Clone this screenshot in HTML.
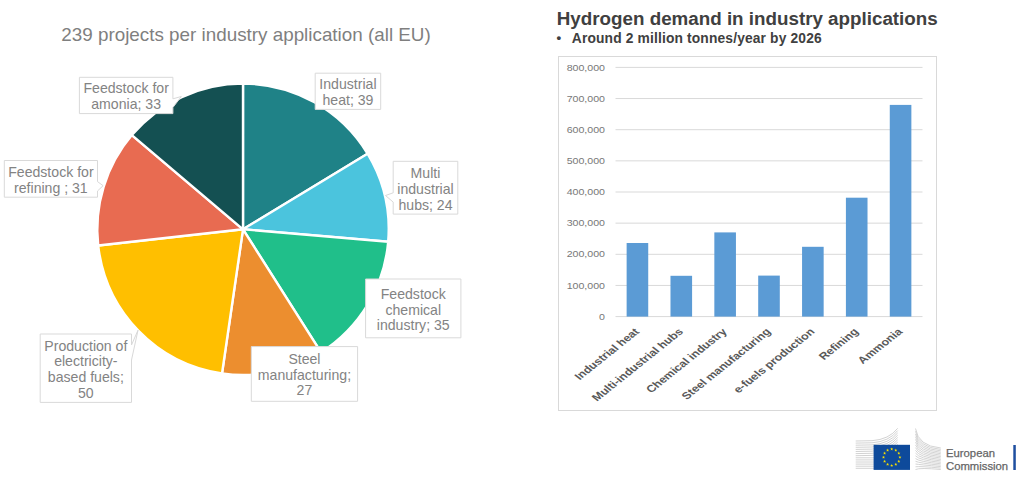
<!DOCTYPE html>
<html><head><meta charset="utf-8">
<style>
html,body{margin:0;padding:0;background:#fff;}
body{width:1024px;height:483px;position:relative;overflow:hidden;font-family:"Liberation Sans",sans-serif;}
.t{position:absolute;white-space:nowrap;line-height:1;}
svg{position:absolute;left:0;top:0;}
svg text{font-family:"Liberation Sans",sans-serif;}
</style></head>
<body>
<svg width="1024" height="483" viewBox="0 0 1024 483">
<g stroke="#fff" stroke-width="2.4" stroke-linejoin="round">
<path d="M243.00,229.30 L243.00,83.60 A145.7,145.7 0 0 1 367.55,153.70 Z" fill="#1f8287"/>
<path d="M243.00,229.30 L367.55,153.70 A145.7,145.7 0 0 1 388.17,241.73 Z" fill="#4bc4dd"/>
<path d="M243.00,229.30 L388.17,241.73 A145.7,145.7 0 0 1 321.04,352.34 Z" fill="#20bf8a"/>
<path d="M243.00,229.30 L321.04,352.34 A145.7,145.7 0 0 1 222.01,373.48 Z" fill="#ec8e2f"/>
<path d="M243.00,229.30 L222.01,373.48 A145.7,145.7 0 0 1 98.21,245.55 Z" fill="#ffbf00"/>
<path d="M243.00,229.30 L98.21,245.55 A145.7,145.7 0 0 1 131.87,135.08 Z" fill="#e86b51"/>
<path d="M243.00,229.30 L131.87,135.08 A145.7,145.7 0 0 1 243.00,83.60 Z" fill="#145052"/>
</g>
<path d="M315.2,73.2 L380.7,73.2 L380.7,109.4 L315.2,109.4 Z" fill="#fff" stroke="#d9d9d9" stroke-width="1"/>
<text x="347.95" y="89.20" text-anchor="middle" font-size="14.1" fill="#838383">Industrial</text>
<text x="347.95" y="105.00" text-anchor="middle" font-size="14.1" fill="#838383">heat; 39</text>
<path d="M393.2,161.3 L457.8,161.3 L457.8,214.1 L393.2,214.1 L393.2,202.1 L385.5,195.5 L393.2,192.8 Z" fill="#fff" stroke="#d9d9d9" stroke-width="1"/>
<text x="425.50" y="178.00" text-anchor="middle" font-size="14.1" fill="#838383">Multi</text>
<text x="425.50" y="193.80" text-anchor="middle" font-size="14.1" fill="#838383">industrial</text>
<text x="425.50" y="209.60" text-anchor="middle" font-size="14.1" fill="#838383">hubs; 24</text>
<path d="M365.6,279.0 L460.9,279.0 L460.9,337.8 L365.6,337.8 Z" fill="#fff" stroke="#d9d9d9" stroke-width="1"/>
<text x="413.25" y="298.70" text-anchor="middle" font-size="14.1" fill="#838383">Feedstock</text>
<text x="413.25" y="314.50" text-anchor="middle" font-size="14.1" fill="#838383">chemical</text>
<text x="413.25" y="330.30" text-anchor="middle" font-size="14.1" fill="#838383">industry; 35</text>
<path d="M251.3,346.6 L357.6,346.6 L357.6,401.3 L251.3,401.3 Z" fill="#fff" stroke="#d9d9d9" stroke-width="1"/>
<text x="304.45" y="363.70" text-anchor="middle" font-size="14.1" fill="#838383">Steel</text>
<text x="304.45" y="379.50" text-anchor="middle" font-size="14.1" fill="#838383">manufacturing;</text>
<text x="304.45" y="395.30" text-anchor="middle" font-size="14.1" fill="#838383">27</text>
<path d="M40.2,334.0 L131.5,334.0 L131.5,345 L138,330.2 L131.5,360 L131.5,402.4 L40.2,402.4 Z" fill="#fff" stroke="#d9d9d9" stroke-width="1"/>
<text x="85.85" y="350.50" text-anchor="middle" font-size="14.1" fill="#838383">Production of</text>
<text x="85.85" y="366.30" text-anchor="middle" font-size="14.1" fill="#838383">electricity-</text>
<text x="85.85" y="382.10" text-anchor="middle" font-size="14.1" fill="#838383">based fuels;</text>
<text x="85.85" y="397.90" text-anchor="middle" font-size="14.1" fill="#838383">50</text>
<path d="M4.3,160.5 L97.5,160.5 L97.5,181.6 L103.1,185.7 L97.5,191 L97.5,197.2 L4.3,197.2 Z" fill="#fff" stroke="#d9d9d9" stroke-width="1"/>
<text x="50.90" y="176.70" text-anchor="middle" font-size="14.1" fill="#838383">Feedstock for</text>
<text x="50.90" y="192.50" text-anchor="middle" font-size="14.1" fill="#838383">refining ; 31</text>
<path d="M79.4,77.3 L172.9,77.3 L172.9,98.8 L181.3,96.5 L172.9,107.5 L172.9,113.6 L79.4,113.6 Z" fill="#fff" stroke="#d9d9d9" stroke-width="1"/>
<text x="126.15" y="93.00" text-anchor="middle" font-size="14.1" fill="#838383">Feedstock for</text>
<text x="126.15" y="108.80" text-anchor="middle" font-size="14.1" fill="#838383">amonia; 33</text>
<text x="61.3" y="40.8" font-size="18.83" fill="#7f7f7f">239 projects per industry application (all EU)</text>
<text x="556.8" y="24.8" font-size="18.8" font-weight="bold" fill="#404040">Hydrogen demand in industry applications</text>
<text x="556.4" y="41.7" font-size="13.3" font-weight="bold" fill="#404040">•</text>
<text x="571.8" y="42.6" font-size="13.8" font-weight="bold" fill="#404040" letter-spacing="0.15">Around 2 million tonnes/year by 2026</text>
<rect x="558.5" y="56.5" width="378.0" height="354.0" fill="none" stroke="#d9d9d9" stroke-width="1"/>
<line x1="615.5" y1="316.60" x2="922.5" y2="316.60" stroke="#d9d9d9" stroke-width="1"/>
<line x1="615.5" y1="285.45" x2="922.5" y2="285.45" stroke="#d9d9d9" stroke-width="1"/>
<line x1="615.5" y1="254.30" x2="922.5" y2="254.30" stroke="#d9d9d9" stroke-width="1"/>
<line x1="615.5" y1="223.15" x2="922.5" y2="223.15" stroke="#d9d9d9" stroke-width="1"/>
<line x1="615.5" y1="192.00" x2="922.5" y2="192.00" stroke="#d9d9d9" stroke-width="1"/>
<line x1="615.5" y1="160.85" x2="922.5" y2="160.85" stroke="#d9d9d9" stroke-width="1"/>
<line x1="615.5" y1="129.70" x2="922.5" y2="129.70" stroke="#d9d9d9" stroke-width="1"/>
<line x1="615.5" y1="98.55" x2="922.5" y2="98.55" stroke="#d9d9d9" stroke-width="1"/>
<line x1="615.5" y1="67.40" x2="922.5" y2="67.40" stroke="#d9d9d9" stroke-width="1"/>
<text transform="translate(605,319.70) scale(1.25,1)" x="0" y="0" text-anchor="end" font-size="8.5" fill="#787878">0</text>
<text transform="translate(605,288.55) scale(1.25,1)" x="0" y="0" text-anchor="end" font-size="8.5" fill="#787878">100,000</text>
<text transform="translate(605,257.40) scale(1.25,1)" x="0" y="0" text-anchor="end" font-size="8.5" fill="#787878">200,000</text>
<text transform="translate(605,226.25) scale(1.25,1)" x="0" y="0" text-anchor="end" font-size="8.5" fill="#787878">300,000</text>
<text transform="translate(605,195.10) scale(1.25,1)" x="0" y="0" text-anchor="end" font-size="8.5" fill="#787878">400,000</text>
<text transform="translate(605,163.95) scale(1.25,1)" x="0" y="0" text-anchor="end" font-size="8.5" fill="#787878">500,000</text>
<text transform="translate(605,132.80) scale(1.25,1)" x="0" y="0" text-anchor="end" font-size="8.5" fill="#787878">600,000</text>
<text transform="translate(605,101.65) scale(1.25,1)" x="0" y="0" text-anchor="end" font-size="8.5" fill="#787878">700,000</text>
<text transform="translate(605,70.50) scale(1.25,1)" x="0" y="0" text-anchor="end" font-size="8.5" fill="#787878">800,000</text>
<rect x="626.63" y="243.00" width="21.6" height="73.60" fill="#5b9bd5"/>
<rect x="670.49" y="275.80" width="21.6" height="40.80" fill="#5b9bd5"/>
<rect x="714.34" y="232.40" width="21.6" height="84.20" fill="#5b9bd5"/>
<rect x="758.20" y="275.60" width="21.6" height="41.00" fill="#5b9bd5"/>
<rect x="802.06" y="246.80" width="21.6" height="69.80" fill="#5b9bd5"/>
<rect x="845.91" y="197.70" width="21.6" height="118.90" fill="#5b9bd5"/>
<rect x="889.77" y="104.90" width="21.6" height="211.70" fill="#5b9bd5"/>
<text transform="translate(639.93,332.30) scale(1.25,1) rotate(-45)" x="0" y="0" text-anchor="end" font-size="10.0" font-weight="bold" fill="#595959">Industrial heat</text>
<text transform="translate(683.79,332.30) scale(1.25,1) rotate(-45)" x="0" y="0" text-anchor="end" font-size="10.0" font-weight="bold" fill="#595959">Multi-industrial hubs</text>
<text transform="translate(727.64,332.30) scale(1.25,1) rotate(-45)" x="0" y="0" text-anchor="end" font-size="10.0" font-weight="bold" fill="#595959">Chemical industry</text>
<text transform="translate(771.50,332.30) scale(1.25,1) rotate(-45)" x="0" y="0" text-anchor="end" font-size="10.0" font-weight="bold" fill="#595959">Steel manufacturing</text>
<text transform="translate(815.36,332.30) scale(1.25,1) rotate(-45)" x="0" y="0" text-anchor="end" font-size="10.0" font-weight="bold" fill="#595959">e-fuels production</text>
<text transform="translate(859.21,332.30) scale(1.25,1) rotate(-45)" x="0" y="0" text-anchor="end" font-size="10.0" font-weight="bold" fill="#595959">Refining</text>
<text transform="translate(903.07,332.30) scale(1.25,1) rotate(-45)" x="0" y="0" text-anchor="end" font-size="10.0" font-weight="bold" fill="#595959">Ammonia</text>
<path d="M855.7,441.00 L872,440.70 Q889,439.50 897.7,428.30" fill="none" stroke="#cdcdcd" stroke-width="0.9"/>
<path d="M855.7,443.10 L872,442.80 Q889,441.60 897.7,430.60" fill="none" stroke="#cdcdcd" stroke-width="0.9"/>
<path d="M855.7,445.20 L872,444.90 Q889,443.70 897.7,432.90" fill="none" stroke="#cdcdcd" stroke-width="0.9"/>
<path d="M855.7,447.30 L872,447.00 Q889,445.80 897.7,435.20" fill="none" stroke="#cdcdcd" stroke-width="0.9"/>
<path d="M855.7,449.40 L872,449.10 Q889,447.90 897.7,437.50" fill="none" stroke="#cdcdcd" stroke-width="0.9"/>
<path d="M855.7,451.50 L872,451.20 Q889,450.00 897.7,439.80" fill="none" stroke="#cdcdcd" stroke-width="0.9"/>
<path d="M855.7,453.60 L872,453.30 Q889,452.10 897.7,442.10" fill="none" stroke="#cdcdcd" stroke-width="0.9"/>
<path d="M855.7,455.70 L872,455.40 Q889,454.20 897.7,444.40" fill="none" stroke="#cdcdcd" stroke-width="0.9"/>
<line x1="855.7" y1="457.80" x2="874" y2="457.80" stroke="#cdcdcd" stroke-width="0.9"/>
<line x1="855.7" y1="459.90" x2="874" y2="459.90" stroke="#cdcdcd" stroke-width="0.9"/>
<line x1="855.7" y1="462.00" x2="874" y2="462.00" stroke="#cdcdcd" stroke-width="0.9"/>
<line x1="855.7" y1="464.10" x2="874" y2="464.10" stroke="#cdcdcd" stroke-width="0.9"/>
<line x1="855.7" y1="466.20" x2="874" y2="466.20" stroke="#cdcdcd" stroke-width="0.9"/>
<line x1="855.7" y1="468.30" x2="874" y2="468.30" stroke="#cdcdcd" stroke-width="0.9"/>
<path d="M915.5,428.50 Q918.00,446.00 940.8,448.00" fill="none" stroke="#cfcfcf" stroke-width="0.9"/>
<path d="M915.5,431.23 Q918.13,447.43 940.8,449.43" fill="none" stroke="#cfcfcf" stroke-width="0.9"/>
<path d="M915.5,433.97 Q918.27,448.87 940.8,450.87" fill="none" stroke="#cfcfcf" stroke-width="0.9"/>
<path d="M915.5,436.70 Q918.40,450.30 940.8,452.30" fill="none" stroke="#cfcfcf" stroke-width="0.9"/>
<path d="M915.5,439.43 Q918.53,451.73 940.8,453.73" fill="none" stroke="#cfcfcf" stroke-width="0.9"/>
<path d="M915.5,442.17 Q918.67,453.17 940.8,455.17" fill="none" stroke="#cfcfcf" stroke-width="0.9"/>
<path d="M915.5,444.90 Q918.80,454.60 940.8,456.60" fill="none" stroke="#cfcfcf" stroke-width="0.9"/>
<path d="M915.5,447.63 Q918.93,456.03 940.8,458.03" fill="none" stroke="#cfcfcf" stroke-width="0.9"/>
<path d="M915.5,450.37 Q919.07,457.47 940.8,459.47" fill="none" stroke="#cfcfcf" stroke-width="0.9"/>
<path d="M915.5,453.10 Q919.20,458.90 940.8,460.90" fill="none" stroke="#cfcfcf" stroke-width="0.9"/>
<path d="M915.5,455.83 Q919.33,460.33 940.8,462.33" fill="none" stroke="#cfcfcf" stroke-width="0.9"/>
<path d="M915.5,458.57 Q919.47,461.77 940.8,463.77" fill="none" stroke="#cfcfcf" stroke-width="0.9"/>
<path d="M915.5,461.30 Q919.60,463.20 940.8,465.20" fill="none" stroke="#cfcfcf" stroke-width="0.9"/>
<path d="M915.5,464.03 Q919.73,464.63 940.8,466.63" fill="none" stroke="#cfcfcf" stroke-width="0.9"/>
<path d="M915.5,466.77 Q919.87,466.07 940.8,468.07" fill="none" stroke="#cfcfcf" stroke-width="0.9"/>
<path d="M915.5,469.50 Q920.00,467.50 940.8,469.50" fill="none" stroke="#cfcfcf" stroke-width="0.9"/>
<rect x="873.6" y="444.8" width="36.4" height="25.1" fill="#0e4a9b"/>
<polygon points="891.70,447.50 892.11,448.53 893.22,448.61 892.37,449.32 892.64,450.39 891.70,449.80 890.76,450.39 891.03,449.32 890.18,448.61 891.29,448.53" fill="#f8e000"/>
<polygon points="895.80,448.60 896.21,449.63 897.32,449.70 896.47,450.41 896.74,451.49 895.80,450.90 894.86,451.49 895.13,450.41 894.28,449.70 895.39,449.63" fill="#f8e000"/>
<polygon points="898.80,451.60 899.21,452.63 900.32,452.71 899.47,453.42 899.74,454.49 898.80,453.90 897.86,454.49 898.14,453.42 897.28,452.71 898.39,452.63" fill="#f8e000"/>
<polygon points="899.90,455.70 900.31,456.73 901.42,456.81 900.57,457.52 900.84,458.59 899.90,458.00 898.96,458.59 899.23,457.52 898.38,456.81 899.49,456.73" fill="#f8e000"/>
<polygon points="898.80,459.80 899.21,460.83 900.32,460.91 899.47,461.62 899.74,462.69 898.80,462.10 897.86,462.69 898.14,461.62 897.28,460.91 898.39,460.83" fill="#f8e000"/>
<polygon points="895.80,462.80 896.21,463.84 897.32,463.91 896.47,464.62 896.74,465.70 895.80,465.10 894.86,465.70 895.13,464.62 894.28,463.91 895.39,463.84" fill="#f8e000"/>
<polygon points="891.70,463.90 892.11,464.93 893.22,465.01 892.37,465.72 892.64,466.79 891.70,466.20 890.76,466.79 891.03,465.72 890.18,465.01 891.29,464.93" fill="#f8e000"/>
<polygon points="887.60,462.80 888.01,463.84 889.12,463.91 888.27,464.62 888.54,465.70 887.60,465.10 886.66,465.70 886.93,464.62 886.08,463.91 887.19,463.84" fill="#f8e000"/>
<polygon points="884.60,459.80 885.01,460.83 886.12,460.91 885.26,461.62 885.54,462.69 884.60,462.10 883.66,462.69 883.93,461.62 883.08,460.91 884.19,460.83" fill="#f8e000"/>
<polygon points="883.50,455.70 883.91,456.73 885.02,456.81 884.17,457.52 884.44,458.59 883.50,458.00 882.56,458.59 882.83,457.52 881.98,456.81 883.09,456.73" fill="#f8e000"/>
<polygon points="884.60,451.60 885.01,452.63 886.12,452.71 885.26,453.42 885.54,454.49 884.60,453.90 883.66,454.49 883.93,453.42 883.08,452.71 884.19,452.63" fill="#f8e000"/>
<polygon points="887.60,448.60 888.01,449.63 889.12,449.70 888.27,450.41 888.54,451.49 887.60,450.90 886.66,451.49 886.93,450.41 886.08,449.70 887.19,449.63" fill="#f8e000"/>
<text x="946" y="456.6" font-size="11.3" fill="#666" stroke="#666" stroke-width="0.25">European</text>
<text x="946" y="469.9" font-size="11.3" fill="#666" stroke="#666" stroke-width="0.25">Commission</text>
<rect x="1013.3" y="445" width="2.5" height="25" fill="#1f4fa0"/>
</svg>
</body></html>
